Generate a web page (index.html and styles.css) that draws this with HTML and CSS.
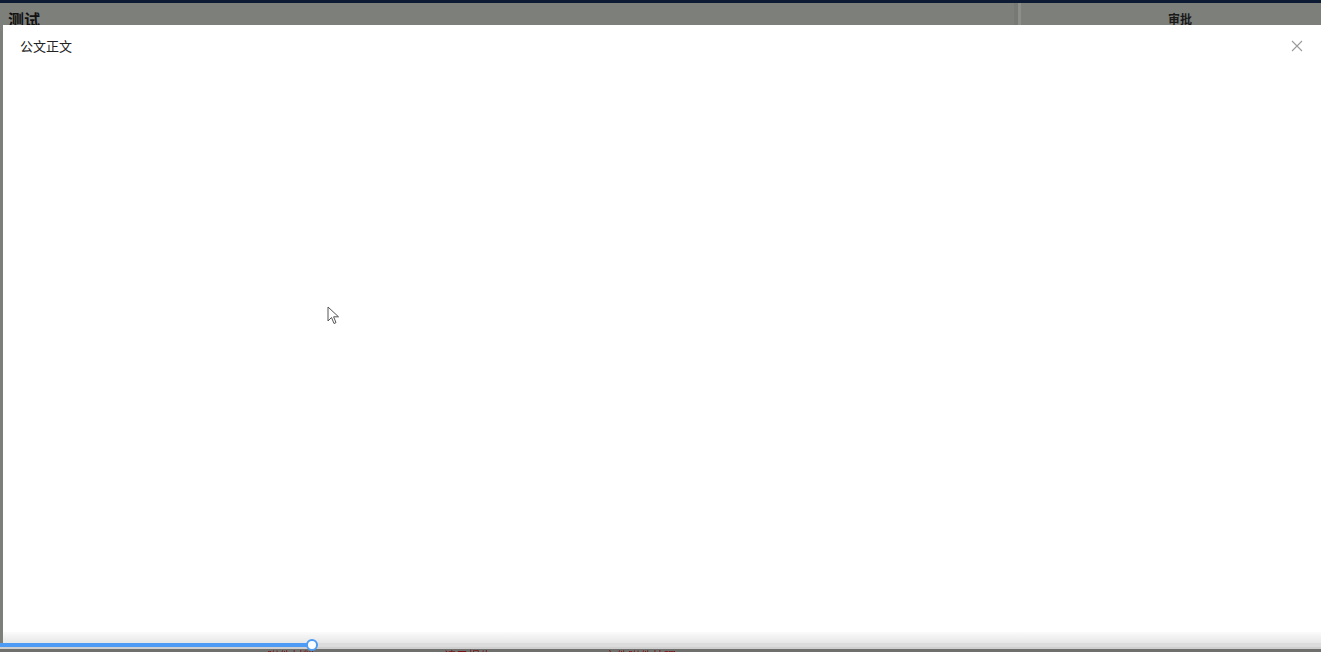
FILE: index.html
```html
<!DOCTYPE html>
<html lang="zh">

<head>
    <meta charset="UTF-8">
    <meta name="viewport" content="width=device-width, initial-scale=1.0">
    <title>公文正文</title>
    <link rel="stylesheet" href="styles.css">
</head>

<body>
    <div class="topbar"></div>
    <div class="page">
        <div class="pageMain">
            <h1 class="pageTitle">测试</h1>
        </div>
        <div class="pageSide">
            <div class="sideHead">审批</div>
        </div>
    </div>

    <div class="modal">
        <div class="modalHeader">
            <span class="modalTitle">公文正文</span>
            <button class="modalClose" aria-label="关闭">
                <svg width="12" height="12" viewBox="0 0 12 12">
                    <path d="M1 1 L11 11 M11 1 L1 11" stroke="#9a9a9a" stroke-width="1.1" fill="none"></path>
                </svg>
            </button>
        </div>
        <div class="modalBody"></div>
    </div>

    <svg class="cursor" width="14" height="20" viewBox="0 0 14 20">
        <path d="M1 1 L1 15 L4.5 11.5 L7 17.5 L9 16.6 L6.6 10.8 L11.5 10.8 Z" fill="#fff" stroke="#555" stroke-width="1"></path>
    </svg>

    <div class="player">
        <div class="playerShade"></div>
        <div class="playerTrack">
            <div class="playerDone" style="width: 312px;"></div>
            <div class="playerKnob" style="left: 312px;"></div>
        </div>
        <div class="playerEdge"></div>
        <div class="playerBelow">
            <span class="redText" style="margin-left: 205px;">一</span>
            <span class="redText" style="margin-left: 50px;">附件材料</span>
            <span class="redText" style="margin-left: 62px;">一</span>
            <span class="redText" style="margin-left: 55px;">请示报告</span>
            <span class="redText" style="margin-left: 70px;">一</span>
            <span class="redText" style="margin-left: 30px;">文件附件处理</span>
            <span class="redText" style="margin-left: 80px;">一</span>
        </div>
    </div>
</body>

</html>
```

FILE: styles.css
```css
body {
    margin: 0px;
    padding: 0px;
    height: 652px;
    overflow: hidden;
    background-color: #7d7f7b;
    font-family: "Noto Sans CJK SC", "Noto Sans", sans-serif;
}

.topbar {
    height: 3px;
    background-color: #0c1a33;
}

.page {
    display: flex;
    height: 649px;
}

.pageMain {
    flex: 1;
    padding: 6px 8px;
}

.pageTitle {
    margin: 0px;
    font-size: 16px;
    line-height: 20px;
    font-weight: bold;
    color: #111;
}

.pageSide {
    width: 300px;
    border-left: 3px solid #8c8e8a;
    box-shadow: -4px 0 0 #777975;
}

.sideHead {
    text-align: center;
    font-size: 12px;
    font-weight: bold;
    color: #1a1a1a;
    padding-top: 7px;
    padding-left: 18px;
}

.modal {
    position: fixed;
    left: 3px;
    right: 0px;
    top: 25px;
    bottom: 20px;
    background-color: #fff;
    display: flex;
    flex-direction: column;
}

.modalHeader {
    display: flex;
    align-items: center;
    justify-content: space-between;
    height: 42px;
    padding: 0px 18px;
}

.modalTitle {
    font-size: 13px;
    color: #222;
    margin-top: -2px;
    margin-left: -1px;
}

.modalClose {
    border: none;
    background: none;
    padding: 0px;
    display: flex;
    cursor: pointer;
}

.modalBody {
    flex: 1;
}

.cursor {
    position: fixed;
    left: 327px;
    top: 306px;
}

.player {
    position: fixed;
    left: 0px;
    right: 0px;
    bottom: 0px;
    height: 20px;
    display: flex;
    flex-direction: column;
}

.playerShade {
    height: 11px;
    background: linear-gradient(#fbfbfb, #e6e6e6);
    margin-left: 3px;
}

.playerTrack {
    position: relative;
    height: 4px;
    background-color: #dcdcdc;
}

.playerDone {
    height: 4px;
    background-color: #4d9bf5;
}

.playerKnob {
    position: absolute;
    top: -4px;
    width: 8px;
    height: 8px;
    margin-left: -6px;
    border-radius: 50%;
    border: 2px solid #4d9bf5;
    background-color: #fff;
}

.playerEdge {
    height: 2px;
    background-color: #cfcfcf;
}

.playerBelow {
    flex: 1;
    background-color: #6f706d;
    overflow: hidden;
    display: flex;
    align-items: flex-start;
}

.redText {
    font-size: 12px;
    line-height: 12px;
    color: #7a1414;
    margin-top: 1px;
    white-space: nowrap;
}
```
